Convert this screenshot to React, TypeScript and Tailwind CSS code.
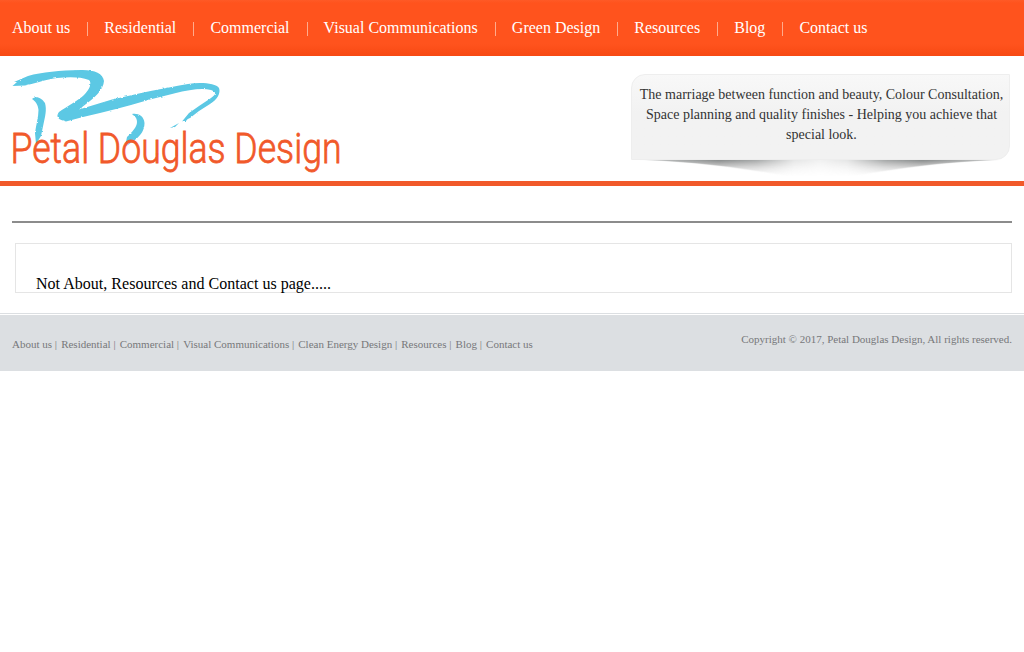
const navItems = ['About us', 'Residential', 'Commercial', 'Visual Communications', 'Green Design', 'Resources', 'Blog', 'Contact us'];
const footerItems = ['About us', 'Residential', 'Commercial', 'Visual Communications', 'Clean Energy Design', 'Resources', 'Blog', 'Contact us'];

function Logo() {
  return (
    <svg className="block overflow-visible" width="350" height="117" viewBox="0 64 350 117" role="img" aria-label="Petal Douglas Design">
      <defs>
        <filter id="brush" x="-5%" y="-5%" width="110%" height="110%">
          <feTurbulence type="fractalNoise" baseFrequency="0.3" numOctaves="2" seed="4" result="n" />
          <feDisplacementMap in="SourceGraphic" in2="n" scale="2.2" xChannelSelector="R" yChannelSelector="G" />
        </filter>
      </defs>
      <g fill="#5bc8e4" filter="url(#brush)">
        <path d="M12.500 86 L17 82 L14 82 L28 76 C42 72 60 70.500 80 70 C94 69.500 103 73 104 81 C103.500 90 94 98 86 104 L79 109.500 L112 99.500 C140 93 165 88 188 84 C200 82 216 83 219 88 C221 93 217 100 210 104 L199 111 L190 118 L182 121.500 L189 113 L199 106 L211 98 C217 94 216 92 211 90 C202 88 190 89.500 174 93.500 L150 99.500 L131 105 L116 109 L100 113 L83 117 L66 121.500 C59 120 55 117 59 112 C66 107 79 100 84 95 C90 89 92 83 89 80 C80 76.500 68 77 57 78 C44 80 33 84 25 85.500 Z" />
        <path d="M32 99 C36 95 42 98 45 103 C47 110 45 117 43.500 124 L41 136 L36 144 L35 133 C36 125 38.500 117 38.500 110 C38 104 35 101 32 99 Z" />
        <path d="M132 114 C138 113 144 116 144.500 123 C144.500 130 141 135 136 139 L125 147 L127 137 C132 132 137 127 137 122 C137 117 134 116 132 114 Z" />
        <path d="M170 128 L179 123 L175 127 Z M183 121 L190 116 L186 121 Z" />
      </g>
      <text x="10.5" y="162.7" fill="#f1592a" stroke="#f1592a" strokeWidth="0.8" fontSize="42.5" fontWeight="300" textLength="331" lengthAdjust="spacingAndGlyphs" className="font-['Roboto',sans-serif]">Petal Douglas Design</text>
    </svg>
  );
}

function CardShadow() {
  return (
    <svg className="block" width="379" height="20" viewBox="0 0 379 20" aria-hidden="true">
      <defs>
        <linearGradient id="shade" x1="0" y1="0" x2="0" y2="1">
          <stop offset="0" stopColor="#7c8080" stopOpacity="1" />
          <stop offset="0.55" stopColor="#999999" stopOpacity="0.4" />
          <stop offset="1" stopColor="#bbbbbb" stopOpacity="0.05" />
        </linearGradient>
        <linearGradient id="spread" x1="0" x2="1">
          <stop offset="0.04" stopColor="#fff" stopOpacity="0.5" />
          <stop offset="0.23" stopColor="#fff" stopOpacity="1" />
          <stop offset="0.33" stopColor="#fff" stopOpacity="0.75" />
          <stop offset="0.43" stopColor="#fff" stopOpacity="0.22" />
          <stop offset="0.5" stopColor="#fff" stopOpacity="0.12" />
          <stop offset="0.57" stopColor="#fff" stopOpacity="0.22" />
          <stop offset="0.67" stopColor="#fff" stopOpacity="0.75" />
          <stop offset="0.77" stopColor="#fff" stopOpacity="1" />
          <stop offset="0.96" stopColor="#fff" stopOpacity="0.5" />
        </linearGradient>
        <mask id="fade"><rect width="379" height="20" fill="url(#spread)" /></mask>
        <filter id="soft" x="-5%" y="-60%" width="110%" height="220%"><feGaussianBlur stdDeviation="3 0.5" /></filter>
      </defs>
      <g mask="url(#fade)">
        <path d="M14 -1 H365 V0 C315 2 265 8 225 16 H154 C114 8 64 2 14 0 Z" fill="url(#shade)" filter="url(#soft)" />
      </g>
    </svg>
  );
}

export default function App() {
  return (
    <div className="min-h-screen bg-white font-['Liberation_Serif',serif] text-base text-black">
      <nav className="flex h-14 items-center bg-[linear-gradient(to_bottom,#fe5a26_0px,#ff531d_3px,#ff531d_44px,#f74913_56px)] pl-3 text-white">
        {navItems.map((item, i) => (
          <a key={item} href="#" className={i ? 'ml-[17px] flex items-center leading-6' : 'flex items-center leading-6'}>
            {i > 0 && <span className="mt-0.5 mr-[16.1px] h-3.5 w-px bg-[#ffab8c]" />}
            {item}
          </a>
        ))}
      </nav>
      <header className="flex h-[130px] justify-between border-b-[5px] border-[#f1592a] pt-2">
        <Logo />
        <div className="mt-[10px] mr-[14px] w-[379px]">
          <p className="h-[86px] rounded-tl-[14px] rounded-br-[14px] border border-[#eeeeee] bg-linear-to-b from-[#f8f8f8] to-[#f2f2f2] to-45% pt-[10px] pr-[2px] pl-1 text-center text-sm leading-5 text-[#333333]">
            The marriage between function and beauty, Colour Consultation, Space planning and quality finishes - Helping you achieve that special look.
          </p>
          <CardShadow />
        </div>
      </header>
      <main className="h-[127px] px-3 pt-[35px]">
        <hr className="border-0 border-t-2 border-[#8c8c8c]" />
        <section className="mt-5 ml-[3px] h-[50px] border border-[#e5e5e5] pt-[31px] pl-5 leading-[18px] tracking-[0.02px]">
          Not About, Resources and Contact us page.....
        </section>
      </main>
      <footer className="mt-px flex h-[57px] justify-between border-t border-white bg-[#dcdfe2] px-3 text-[11px] leading-4 text-[#77787a] shadow-[0_-1px_0_#dcdfe2]">
        <div className="flex pt-[21px]">
          {footerItems.map((item, i) => (
            <span key={item} className="whitespace-pre">{i > 0 && <span className="mr-[1.4px]"> | </span>}<a href="#">{item}</a></span>
          ))}
        </div>
        <p className="pt-4">Copyright © 2017, Petal Douglas Design, All rights reserved.</p>
      </footer>
    </div>
  );
}
